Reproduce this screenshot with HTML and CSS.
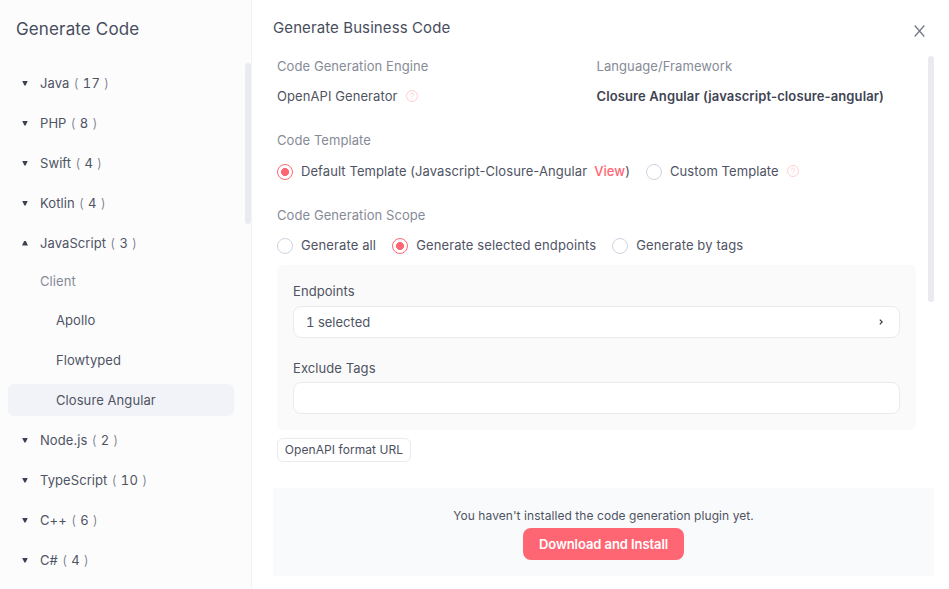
FILE: index.html
```html
<!DOCTYPE html>
<html lang="en">
<head>
<meta charset="utf-8">
<title>Generate Code</title>
<link rel="stylesheet" href="styles.css">
</head>
<body>
<div class="app">
  <aside class="sidebar">
    <h1 class="sidebar-title">Generate Code</h1>
    <nav class="nav">
      <div class="group"><i class="caret"></i>Java<span class="count"><b>(</b> 17 <b>)</b></span></div>
      <div class="group"><i class="caret"></i>PHP<span class="count"><b>(</b> 8 <b>)</b></span></div>
      <div class="group"><i class="caret"></i>Swift<span class="count"><b>(</b> 4 <b>)</b></span></div>
      <div class="group"><i class="caret"></i>Kotlin<span class="count"><b>(</b> 4 <b>)</b></span></div>
      <div class="group"><i class="caret open"></i>JavaScript<span class="count"><b>(</b> 3 <b>)</b></span></div>
      <div class="subhead">Client</div>
      <div class="item">Apollo</div>
      <div class="item">Flowtyped</div>
      <div class="item active">Closure Angular</div>
      <div class="group"><i class="caret"></i>Node.js<span class="count"><b>(</b> 2 <b>)</b></span></div>
      <div class="group"><i class="caret"></i>TypeScript<span class="count"><b>(</b> 10 <b>)</b></span></div>
      <div class="group"><i class="caret"></i>C++<span class="count"><b>(</b> 6 <b>)</b></span></div>
      <div class="group"><i class="caret"></i>C#<span class="count"><b>(</b> 4 <b>)</b></span></div>
    </nav>
    <div class="scrollbar scrollbar-side"></div>
  </aside>
  <main class="main">
    <header class="header">
      <h2 class="title">Generate Business Code</h2>
      <svg class="close" viewBox="0 0 12 12"><path d="M1.2 .5 10.8 11.5M10.8 .5 1.2 11.5"/></svg>
    </header>
    <div class="form">
      <div class="meta">
        <div>
          <div class="label">Code Generation Engine</div>
          <div class="value">OpenAPI Generator
            <svg class="help" viewBox="0 0 12 12"><circle cx="6" cy="6" r="5.5"/><path d="M4.3 4.8C4.3 3.8 5 3.2 6 3.2s1.7.6 1.7 1.5C7.7 5.700 6 5.800 6 7.100M6 8.200v.9"/></svg>
          </div>
        </div>
        <div>
          <div class="label">Language/Framework</div>
          <div class="value strong">Closure Angular (javascript-closure-angular)</div>
        </div>
      </div>
      <div class="label label-template">Code Template</div>
      <div class="radios radios-template">
        <label class="radio"><i class="dot on"></i><span>Default Template (Javascript-Closure-Angular</span><a class="view">View</a><span>)</span></label>
        <label class="radio"><i class="dot"></i><span>Custom Template</span>
          <svg class="help" viewBox="0 0 12 12"><circle cx="6" cy="6" r="5.5"/><path d="M4.3 4.8C4.3 3.8 5 3.2 6 3.2s1.7.6 1.7 1.5C7.7 5.700 6 5.800 6 7.100M6 8.200v.9"/></svg>
        </label>
      </div>
      <div class="label label-scope">Code Generation Scope</div>
      <div class="radios radios-scope">
        <label class="radio"><i class="dot"></i><span>Generate all</span></label>
        <label class="radio"><i class="dot on"></i><span>Generate selected endpoints</span></label>
        <label class="radio"><i class="dot"></i><span>Generate by tags</span></label>
      </div>
      <section class="panel">
        <div class="field-label">Endpoints</div>
        <div class="field"><span>1 selected</span><svg class="chevron" viewBox="0 0 4 6"><path d="M.8.600 3.200 3 .8 5.400"/></svg></div>
        <div class="field-label second">Exclude Tags</div>
        <div class="field"></div>
      </section>
      <button class="url-button">OpenAPI format URL</button>
    </div>
    <footer class="footer">
      <p class="notice">You haven't installed the code generation plugin yet.</p>
      <button class="install">Download and Install</button>
    </footer>
    <div class="scrollbar scrollbar-main"></div>
  </main>
</div>
</body>
</html>
```
FILE: styles.css
```css
* { box-sizing: border-box; }
body {
  margin: 0;
  background: #fff;
  color: #4f5463;
  font: 13px/20px Inter, "Liberation Sans", sans-serif;
  letter-spacing: .08px;
  overflow: hidden;
}
.app { display: flex; height: 589px; }
.sidebar {
  position: relative;
  flex: none;
  width: 252px;
  background: #fcfcfd;
  border-right: 1px solid #f2f3f5;
}
.sidebar-title {
  margin: 0;
  padding: 17px 16px 0;
  height: 67px;
  font-size: 17px;
  line-height: 24px;
  font-weight: 400;
  letter-spacing: .14px;
  color: #484d5d;
}
.nav { display: flex; flex-direction: column; gap: 8px; padding: 0 17px 0 8px; }
.group { display: flex; align-items: center; height: 32px; padding-left: 14px; }
.count { margin-left: 4px; letter-spacing: .35px; white-space: pre; font-variant-numeric: tabular-nums; }
.count b { font-weight: 300; color: #6b7080; }
.caret {
  width: 6px;
  height: 5px;
  margin-right: 12px;
  background: #3c4252;
  clip-path: polygon(0 0, 100% 0, 60% 100%, 40% 100%);
}
.caret.open { clip-path: polygon(40% 0, 60% 0, 100% 100%, 0 100%); }
.subhead { height: 29px; padding-left: 32px; line-height: 29px; color: #868b97; }
.item { height: 32px; padding-left: 48px; line-height: 32px; border-radius: 6px; }
.item.active { background: #f2f3f8; }
.scrollbar { position: absolute; width: 6px; border-radius: 3px; background: #eaebf0; }
.scrollbar-side { top: 63px; right: 0; height: 161px; }
.scrollbar-main { top: 56px; right: 15px; height: 246px; }
.main { position: relative; flex: 1; padding: 0 15px 0 21px; }
.header { display: flex; justify-content: space-between; height: 56px; padding: 18px 8px 0 0; }
.title { margin: 0; font-size: 15px; line-height: 20px; font-weight: 400; letter-spacing: .1px; color: #484d5d; }
.close { width: 13px; height: 12px; margin-top: 6.5px; fill: none; stroke: #707582; stroke-width: 1.2; }
.form { height: 432px; padding: 0 18px 0 4px; }
.meta { display: grid; grid-template-columns: 1fr 1fr; }
.label { line-height: 20px; color: #868b97; }
.value { display: flex; align-items: center; gap: 8px; margin-top: 10px; }
.strong { font-weight: 600; color: #3f4454; letter-spacing: .12px; }
.help { width: 12px; height: 12px; fill: none; stroke: #ffc9cd; stroke-width: .9; }
.label-template { margin-top: 24px; }
.radios { display: flex; align-items: center; gap: 16px; height: 20px; }
.radios-template { margin-top: 12px; }
.label-scope { margin-top: 23px; }
.radios-scope { margin-top: 11px; letter-spacing: .12px; }
.radio { display: flex; align-items: center; white-space: nowrap; }
.radio span, .radio a, .radio .help { margin-bottom: 2px; }
.radio .help { margin-left: 8px; }
.dot { width: 16px; height: 16px; margin-right: 8px; border: 1px solid #d0d3df; border-radius: 50%; background: #fff; }
.dot.on { border-color: #ff6674; background: radial-gradient(circle, #ff6674 3.700px, #fff 4.300px); }
.view { margin-left: 7px; color: #ff6674; font-weight: 500; }
.panel { height: 165px; margin-top: 9px; padding: 16px; border-radius: 6px; background: #fafafa; }
.field-label { margin-bottom: 5px; }
.field-label.second { margin-top: 20px; margin-bottom: 4px; }
.field {
  display: flex;
  align-items: center;
  justify-content: space-between;
  height: 32px;
  padding: 0 16px 0 12px;
  border: 1px solid #eaebec;
  border-radius: 8px;
  background: #fff;
  font-variant-numeric: tabular-nums;
  letter-spacing: 0;
}
.chevron { width: 4px; height: 6px; fill: none; stroke: #303540; stroke-width: 1.200; }
.url-button {
  display: block;
  width: 134px;
  height: 24px;
  margin-top: 8px;
  padding: 0;
  border: 1px solid #eaebec;
  border-radius: 6px;
  background: #fff;
  color: #4b5060;
  font: 12px/20px Inter, sans-serif;
  letter-spacing: .07px;
}
.footer { display: flex; flex-direction: column; align-items: center; height: 88px; padding-top: 18px; background: #f9fafc; }
.notice { margin: 0 0 2px; font-size: 12px; line-height: 20px; letter-spacing: .07px; }
.install {
  width: 161px;
  height: 32px;
  padding: 0;
  border: 0;
  border-radius: 8px;
  background: #ff6674;
  color: #fff;
  font: 600 13px/20px Inter, sans-serif;
  letter-spacing: -.08px;
}
```
